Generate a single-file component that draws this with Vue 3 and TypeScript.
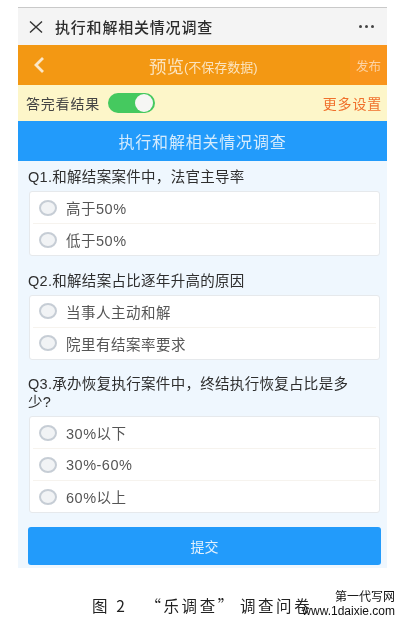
<script setup lang="ts">
interface Question { title: string; options: string[] }
const questions: Question[] = [
  { title: 'Q1.和解结案案件中，法官主导率', options: ['高于50%', '低于50%'] },
  { title: 'Q2.和解结案占比逐年升高的原因', options: ['当事人主动和解', '院里有结案率要求'] },
  { title: 'Q3.承办恢复执行案件中，终结执行恢复占比是多少?', options: ['30%以下', '30%-60%', '60%以上'] },
]
</script>

<template>
  <div class="page">
    <div class="phone">
      <header class="wx">
        <svg class="close" viewBox="0 0 14 12" width="14" height="12"><path d="M1 .5 13 11.500M13 .5 1 11.500" stroke="#333" stroke-width="1.4" fill="none" /></svg>
        <span class="wx-title">执行和解相关情况调查</span>
        <span class="dots"><i></i><i></i><i></i></span>
      </header>
      <div class="nav">
        <svg class="back" viewBox="0 0 12 18" width="12" height="18"><path d="M10 2 3 9l7 7" stroke="#fbe7c8" stroke-width="2.8" fill="none" /></svg>
        <div class="nav-title"><span class="big">预览</span><span class="small">(不保存数据)</span></div>
        <span class="publish">发布</span>
      </div>
      <div class="bar">
        <span class="bar-label">答完看结果</span>
        <span class="switch"><span class="knob"></span></span>
        <span class="more">更多设置</span>
      </div>
      <div class="banner">执行和解相关情况调查</div>
      <main class="body">
        <section v-for="q in questions" :key="q.title" class="question">
          <h2 class="q-title">{{ q.title }}</h2>
          <div class="card">
            <div v-for="o in q.options" :key="o" class="row">
              <span class="radio"></span>
              <span class="opt">{{ o }}</span>
            </div>
          </div>
        </section>
        <button class="submit" type="button">提交</button>
      </main>
    </div>
    <p class="caption">图 2<span class="cap-a">“乐调查”</span><span class="cap-b">调查问卷</span></p>
    <div class="mark"><span>第一代写网</span><span class="url">www.1daixie.com</span></div>
  </div>
</template>

<style>
html, body { margin: 0; background: #fff; }
</style>

<style scoped>
.page {
  position: relative;
  width: 405px;
  height: 624px;
  overflow: hidden;
  padding-top: 7px;
  box-sizing: border-box;
  background: #fff;
  font-family: "Liberation Sans", "Noto Sans CJK SC", sans-serif;
  filter: blur(0.55px);
}
.phone {
  width: 369px;
  margin-left: 18px;
  border-top: 1px solid #c9c9c9;
  background: #eff7fe;
}
.wx {
  height: 37px;
  display: flex;
  align-items: center;
  padding: 0 13px 0 11px;
  background: #f4f4f4;
}
.close { flex: none; }
.wx-title {
  margin-left: 12px;
  font-size: 15px;
  letter-spacing: 0.8px;
  font-weight: 500;
  color: #2c2c2c;
  flex: 1;
}
.dots { display: flex; gap: 3px; }
.dots i { width: 3px; height: 3px; border-radius: 50%; background: #444; }
.nav {
  height: 40px;
  display: flex;
  align-items: center;
  position: relative;
  background: #f39813;
  padding-left: 15px;
}
.nav-title {
  position: absolute;
  left: 131px;
  top: 0;
  height: 40px;
  display: flex;
  align-items: center;
  color: #fbe3bd;
}
.big { font-size: 17.500px; }
.small { font-size: 13px; margin-top: 3px; }
.publish {
  margin-left: auto;
  height: 40px;
  width: 37px;
  display: flex;
  align-items: center;
  justify-content: center;
  background: #f9951c;
  color: #fdd3a4;
  font-size: 12.500px;
}
.bar {
  height: 36px;
  display: flex;
  align-items: center;
  padding: 0 5px 0 8px;
  background: #fdf6c9;
}
.bar-label { font-size: 14px; letter-spacing: 0.8px; color: #444; }
.switch {
  width: 47px;
  height: 20px;
  margin-left: 8px;
  border-radius: 10px;
  background: #45c95f;
  position: relative;
}
.knob {
  position: absolute;
  right: 2px;
  top: 1px;
  width: 18px;
  height: 18px;
  border-radius: 50%;
  background: #f6f6f4;
}
.more { margin-left: auto; font-size: 14px; letter-spacing: 0.8px; color: #f0702c; }
.banner {
  height: 40px;
  display: flex;
  align-items: center;
  justify-content: center;
  background: #229bfb;
  color: #d4ebfd;
  font-size: 16px;
  letter-spacing: 0.8px;
}
.body { padding: 6px 6px 3px 10px; }
.question { margin-bottom: 14.500px; }
.q-title {
  margin: 0;
  padding: 1px 20px 5px 0;
  font-size: 14.500px;
  line-height: 18px;
  font-weight: 400;
  color: #2e2e2e;
  letter-spacing: 0.3px;
}
.card {
  margin: 0 1px;
  background: #fff;
  border: 1px solid #e6e9ec;
  border-radius: 3px;
}
.row {
  height: 31px;
  display: flex;
  align-items: center;
  margin: 0 3px;
  padding-left: 6px;
  border-top: 1px solid #f6f3ee;
}
.row:first-child { border-top: none; }
.radio {
  width: 18px;
  height: 16px;
  box-sizing: border-box;
  border: 2px solid #c6cdd5;
  border-radius: 50%;
  background: #f1f3f5;
}
.opt {
  margin-left: 9px;
  font-size: 14.500px;
  letter-spacing: 0.5px;
  color: #555;
}
.submit {
  display: block;
  width: 353px;
  height: 38px;
  margin-top: -1px;
  border: 0;
  border-radius: 3px;
  background: #229bfb;
  color: #e2f1fd;
  font: inherit;
  font-size: 14px;
}
.caption {
  margin: 27px 0 0 92px;
  font-family: "Noto Sans CJK SC", sans-serif;
  font-size: 15.500px;
  line-height: 20px;
  color: #222;
  letter-spacing: 2.6px;
  white-space: nowrap;
}
.cap-a { margin-left: 18px; }
.cap-b { margin-left: 4px; }
.mark {
  position: absolute;
  right: 10px;
  top: 590px;
  display: flex;
  flex-direction: column;
  align-items: flex-end;
  font-size: 12px;
  line-height: 14px;
  color: #111;
}
.url { font-family: "Liberation Sans", sans-serif; font-size: 12px; }
</style>
